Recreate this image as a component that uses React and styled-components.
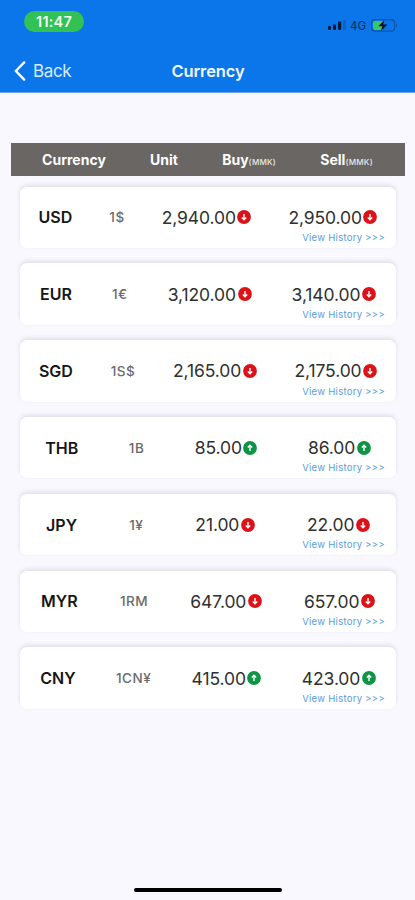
import styled, { createGlobalStyle } from 'styled-components';

const GlobalStyle = createGlobalStyle`
    * {
        box-sizing: border-box;
        margin: 0;
        padding: 0;
    }
    body {
        background-color: #f8f8fe;
        font-family: Inter, 'Liberation Sans', sans-serif;
    }
`;
const Container = styled.div`
    display: flex;
    flex-direction: column;
    width: 100%;
    height: 100vh;
    overflow: hidden;
`;
const Header = styled.header`
    height: 93px;
    background-color: #0b75ea;
    border-bottom: 1px solid #6ba2e8;
`;
const StatusBar = styled.div`
    display: flex;
    justify-content: space-between;
    align-items: flex-start;
    height: 49px;
    padding: 11px 17px 0 24px;
`;
const Time = styled.span`
    display: flex;
    align-items: center;
    justify-content: center;
    width: 60px;
    height: 21px;
    border-radius: 11px;
    background-color: #31c155;
    color: #f2fff4;
    font-size: 14.5px;
    font-weight: 600;
    letter-spacing: .2px;
`;
const Indicators = styled.div`
    display: flex;
    align-items: center;
    height: 14px;
    margin-top: 7px;
    color: #0a2a55;
`;
const Network = styled.span`
    width: 17px;
    margin: 1px 4px 0 4px;
    font-size: 11.5px;
    font-weight: 400;
    line-height: 14px;
`;
const NavBar = styled.nav`
    display: grid;
    grid-template-columns: 1fr auto 1fr;
    align-items: center;
    height: 44px;
    padding: 0 13px 0 14px;
    color: #f2f8ff;
`;
const Back = styled.a`
    display: flex;
    align-items: center;
    gap: 7px;
    font-size: 17px;
    letter-spacing: -.35px;
    color: #dcebff;
`;
const Title = styled.h1`
    font-size: 16.5px;
    font-weight: 600;
    letter-spacing: -.1px;
`;
const Main = styled.main`
    flex-grow: 1;
    padding: 50px 10px 0 11px;
`;
const TableHead = styled.div`
    display: flex;
    align-items: center;
    justify-content: space-around;
    height: 33px;
    padding: 0 10px 0 9px;
    background-color: #696663;
`;
const HeadCell = styled.span`
    color: #fff;
    font-size: 14px;
    font-weight: 700;
    line-height: 20px;
    white-space: nowrap;
`;
const Small = styled.small`
    font-size: 8px;
    font-weight: 600;
    line-height: 0;
    letter-spacing: .2px;
    color: #dedddb;
`;
const List = styled.div`
    display: flex;
    flex-direction: column;
    gap: 15.33px;
    padding: 10.5px 9px 0 9px;
`;
const Card = styled.div`
    position: relative;
    display: flex;
    align-items: center;
    justify-content: space-around;
    height: 61.5px;
    border-radius: 7px;
    background-color: #fff;
    box-shadow: 0 -2px 4px rgba(60, 55, 90, .13);
`;
const Code = styled.span`
    font-size: 16px;
    font-weight: 600;
    color: #161616;
`;
const Unit = styled.span`
    font-size: 13.5px;
    font-weight: 500;
    letter-spacing: .5px;
    color: #6b6b6b;
`;
const Price = styled.span`
    display: flex;
    align-items: center;
    gap: 1.5px;
    font-size: 17.5px;
    letter-spacing: -.1px;
    color: #303030;
`;
const History = styled.a`
    position: absolute;
    right: 11px;
    bottom: 4px;
    font-size: 9.5px;
    line-height: 12px;
    letter-spacing: .28px;
    color: #5b9bdb;
`;
const HomeBar = styled.div`
    width: 148px;
    height: 4px;
    margin: 0 auto 8px;
    border-radius: 2px;
    background-color: #000;
`;

const rates = [
    { code: 'USD', unit: '1$', buy: '2,940.00', sell: '2,950.00', up: false },
    { code: 'EUR', unit: '1€', buy: '3,120.00', sell: '3,140.00', up: false },
    { code: 'SGD', unit: '1S$', buy: '2,165.00', sell: '2,175.00', up: false },
    { code: 'THB', unit: '1B', buy: '85.00', sell: '86.00', up: true },
    { code: 'JPY', unit: '1¥', buy: '21.00', sell: '22.00', up: false },
    { code: 'MYR', unit: '1RM', buy: '647.00', sell: '657.00', up: false },
    { code: 'CNY', unit: '1CN¥', buy: '415.00', sell: '423.00', up: true },
];

const Trend = ({ up }) => (
    <svg width="14" height="14" viewBox="0 0 14 14">
        <circle cx="7" cy="7" r="6.9" fill={up ? '#0d9445' : '#dc1218'} />
        <path
            d={up ? 'M7 10V4.5M4.8 6.4L7 4.2l2.2 2.2' : 'M7 4v5.5M4.8 7.6L7 9.8l2.2-2.2'}
            fill="none"
            stroke="#fff"
            strokeWidth="1.4"
        />
    </svg>
);

const Signal = () => (
    <svg width="18" height="10" viewBox="0 0 18 10">
        <rect x="0" y="6" width="3" height="4" rx=".8" fill="#041a3a" />
        <rect x="5" y="4.5" width="3" height="5.5" rx=".8" fill="#041a3a" />
        <rect x="10" y="1.5" width="3.2" height="8.5" rx=".8" fill="#041a3a" />
        <rect x="15" y="0" width="2.6" height="10" rx=".8" fill="#0b5fc0" />
    </svg>
);

const Battery = () => (
    <svg width="27" height="13" viewBox="0 0 27 13">
        <rect x=".6" y=".6" width="23" height="11.6" rx="3.4" fill="none" stroke="#0f56a8" strokeWidth="1.2" />
        <path d="M4.4 2H12v9H4.4A2.2 2.2 0 0 1 2 8.8V4.2A2.2 2.2 0 0 1 4.4 2z" fill="#35c96b" />
        <path d="M25 4.6c1.6.6 1.6 3.2 0 3.8z" fill="#0f56a8" />
        <path d="M13.4.8L7.4 7.2h4L9.8 12.2l6.6-6.7h-4.2z" fill="#03132b" />
    </svg>
);

const App = () => {
    return (
        <Container>
            <GlobalStyle />
            <Header>
                <StatusBar>
                    <Time>11:47</Time>
                    <Indicators>
                        <Signal />
                        <Network>4G</Network>
                        <Battery />
                    </Indicators>
                </StatusBar>
                <NavBar>
                    <Back>
                        <svg width="12" height="20" viewBox="0 0 12 20">
                            <path d="M10.2 1.4L1.8 10l8.4 8.6" fill="none" stroke="#fff" strokeWidth="2.4" strokeLinecap="round" strokeLinejoin="round" />
                        </svg>
                        Back
                    </Back>
                    <Title>Currency</Title>
                </NavBar>
            </Header>
            <Main>
                <TableHead>
                    <HeadCell>Currency</HeadCell>
                    <HeadCell>Unit</HeadCell>
                    <HeadCell>Buy<Small>(MMK)</Small></HeadCell>
                    <HeadCell>Sell<Small>(MMK)</Small></HeadCell>
                </TableHead>
                <List>
                    {rates.map((rate) => (
                        <Card key={rate.code}>
                            <Code>{rate.code}</Code>
                            <Unit>{rate.unit}</Unit>
                            <Price>{rate.buy}<Trend up={rate.up} /></Price>
                            <Price>{rate.sell}<Trend up={rate.up} /></Price>
                            <History>View History &gt;&gt;&gt;</History>
                        </Card>
                    ))}
                </List>
            </Main>
            <HomeBar />
        </Container>
    );
};

export default App;
